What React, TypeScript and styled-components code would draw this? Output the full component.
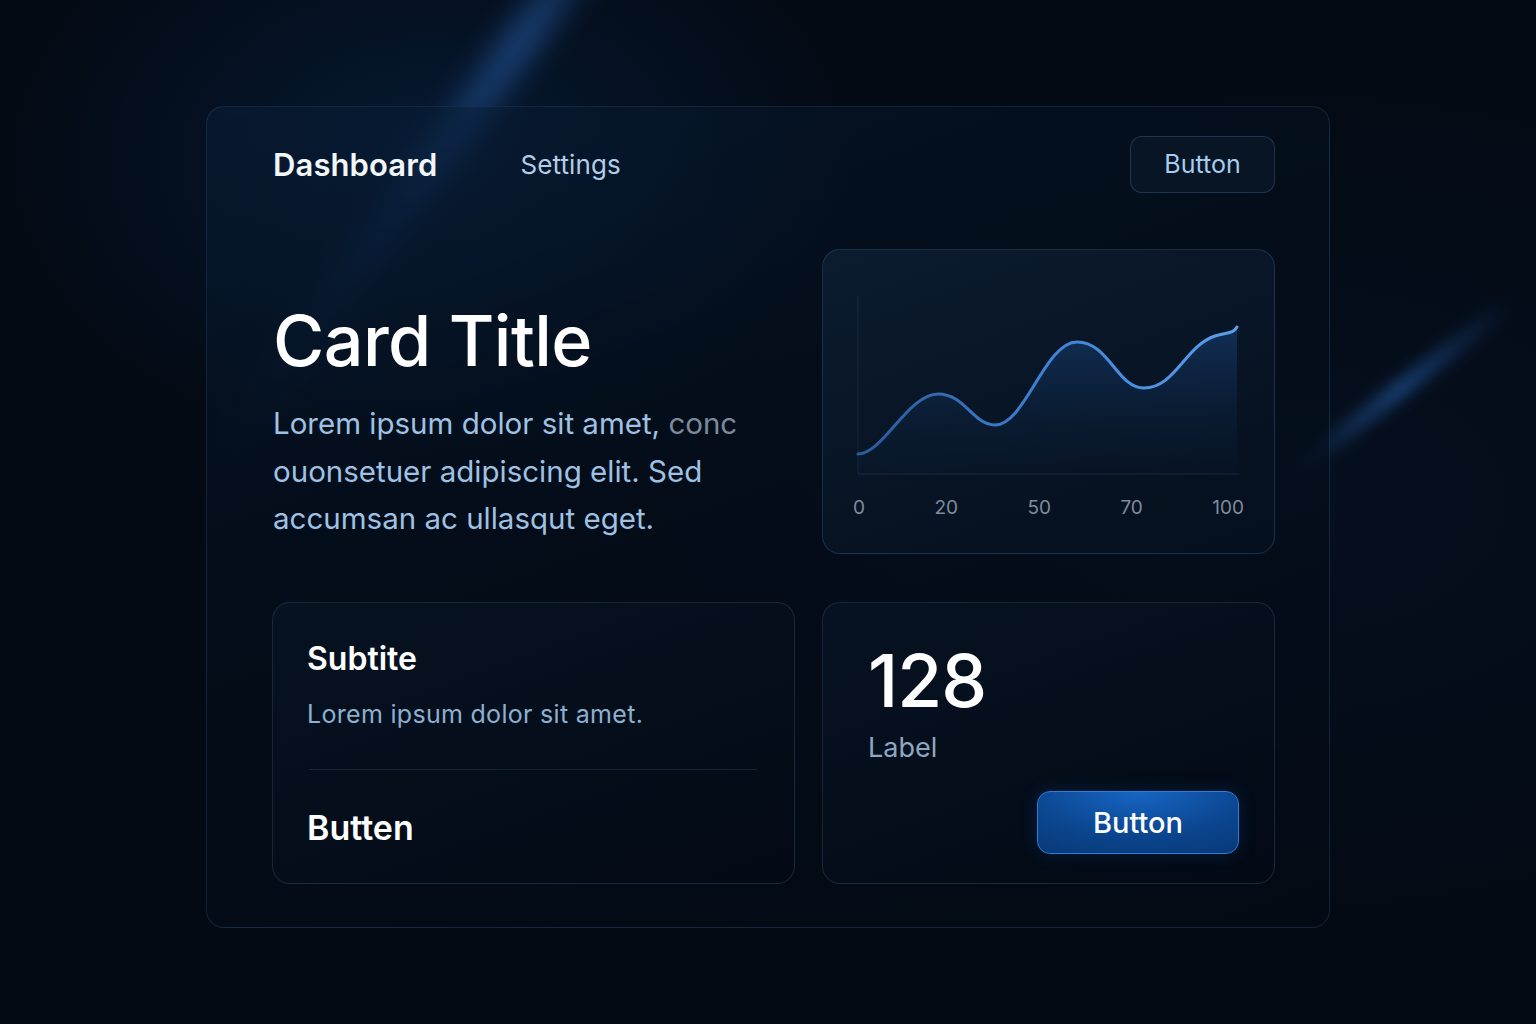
import React from 'react'
import styled, { createGlobalStyle } from 'styled-components'

const GlobalStyle = createGlobalStyle`
  html, body {
    margin: 0;
    padding: 0;
    background: #030a14;
  }
  * { box-sizing: border-box; }
`

const Page = styled.div`
  position: relative;
  width: 1536px;
  height: 1024px;
  overflow: hidden;
  font-family: Inter, "Noto Sans", sans-serif;
  background:
    radial-gradient(ellipse 600px 420px at 430px 160px, rgba(10, 40, 80, 0.5), transparent 70%),
    radial-gradient(ellipse 900px 600px at 1300px 500px, rgba(8, 24, 48, 0.35), transparent 70%),
    #030a14;
  padding: 106px 0 0 206px;

  &::before {
    content: '';
    position: absolute;
    left: 425px;
    top: -230px;
    width: 34px;
    height: 760px;
    background: linear-gradient(180deg, transparent, rgba(50, 120, 215, 0.45) 32%, rgba(30, 90, 170, 0.2) 60%, transparent);
    filter: blur(14px);
    transform: rotate(36deg);
    pointer-events: none;
  }

  &::after {
    content: '';
    position: absolute;
    left: 1392px;
    top: 250px;
    width: 14px;
    height: 280px;
    background: linear-gradient(180deg, transparent, rgba(50, 125, 225, 0.55) 50%, transparent);
    filter: blur(8px);
    transform: rotate(52deg);
    pointer-events: none;
  }
`

const Panel = styled.div`
  position: relative;
  z-index: 1;
  width: 1124px;
  height: 822px;
  border-radius: 18px;
  border: 1px solid rgba(90, 130, 180, 0.2);
  background: linear-gradient(160deg, rgba(10, 32, 58, 0.5) 0%, rgba(5, 16, 30, 0.55) 40%, rgba(3, 10, 20, 0.6) 100%);
  padding: 29px 54px 0 65px;
  display: flex;
  flex-direction: column;
`

const Nav = styled.nav`
  display: flex;
  align-items: center;
  height: 56px;
  gap: 83px;
`

const NavItem = styled.span<{ $active?: boolean }>`
  font-size: ${p => (p.$active ? '31px' : '26px')};
  font-weight: ${p => (p.$active ? 600 : 400)};
  color: ${p => (p.$active ? '#f3f6f9' : '#b3cde6')};
  padding-left: ${p => (p.$active ? '1px' : '0')};
  letter-spacing: 0.1px;
`

const GhostButton = styled.button`
  margin-left: auto;
  width: 145px;
  height: 57px;
  border-radius: 12px;
  border: 1px solid rgba(90, 130, 175, 0.3);
  background: rgba(10, 24, 42, 0.7);
  color: #a6cdf0;
  font-family: Inter, "Noto Sans", sans-serif;
  font-size: 25px;
  font-weight: 400;
`

const Grid = styled.div`
  display: grid;
  grid-template-columns: 523px 453px;
  grid-template-rows: 305px 282px;
  column-gap: 27px;
  row-gap: 48px;
  margin-top: 57px;
`

const Intro = styled.div`
  padding-top: 49px;
  padding-left: 1px;
`

const Title = styled.h1`
  margin: 0;
  font-size: 70px;
  font-weight: 500;
  line-height: 86px;
  color: #ffffff;
  letter-spacing: -0.6px;
`

const Lead = styled.p`
  margin: 16px 0 0;
  font-size: 29.5px;
  font-weight: 400;
  line-height: 47.5px;
  color: #9fc2e4;
`

const Fade = styled.span`
  color: #7c8a9a;
`

const Card = styled.div<{ $tone?: 'chart' | 'plain' }>`
  border-radius: 18px;
  border: 1px solid ${p => (p.$tone === 'chart' ? 'rgba(80, 120, 170, 0.28)' : 'rgba(70, 100, 140, 0.3)')};
  background: ${p =>
    p.$tone === 'chart'
      ? 'linear-gradient(160deg, rgba(14, 32, 54, 0.75), rgba(6, 16, 30, 0.75))'
      : 'linear-gradient(160deg, rgba(8, 20, 36, 0.85), rgba(3, 10, 20, 0.85))'};
  display: flex;
  flex-direction: column;
`

const ChartSvg = styled.svg`
  display: block;
`

const Axis = styled.div`
  display: flex;
  justify-content: space-between;
  margin: 8px 30px 0 30px;
  font-size: 19px;
  color: #7f8c9b;
`

const InfoCard = styled(Card)`
  padding: 36px 34px 0 34px;
`

const SubTitle = styled.h2`
  margin: 0;
  font-size: 32px;
  font-weight: 600;
  line-height: 40px;
  color: #ffffff;
`

const SubText = styled.p`
  margin: 19px 0 0;
  font-size: 25px;
  line-height: 32px;
  color: #8eb0d0;
  letter-spacing: 0.3px;
`

const Divider = styled.hr`
  margin: 39px 0 0 2px;
  width: 448px;
  border: 0;
  height: 1px;
  background: rgba(90, 120, 160, 0.22);
`

const FootTitle = styled.div`
  margin-top: 36px;
  font-size: 34px;
  font-weight: 600;
  line-height: 44px;
  color: #ffffff;
`

const StatCard = styled(Card)`
  padding: 38px 35px 0 45px;
`

const StatValue = styled.div`
  font-size: 73px;
  font-weight: 500;
  line-height: 80px;
  color: #ffffff;
  letter-spacing: -1px;
`

const StatLabel = styled.div`
  margin-top: 10px;
  font-size: 27px;
  line-height: 34px;
  color: #8ea7c1;
`

const PrimaryButton = styled.button`
  align-self: flex-end;
  margin-top: 26px;
  width: 202px;
  height: 63px;
  border-radius: 13px;
  border: 1px solid #2a7fdc;
  background: radial-gradient(ellipse 180px 70px at 50% 0%, #1666c4, #0b4690 60%, #093a78);
  color: #ffffff;
  font-family: Inter, "Noto Sans", sans-serif;
  font-size: 29px;
  font-weight: 500;
  box-shadow: 0 0 18px rgba(30, 110, 220, 0.18);
`

const curve =
  'M35,204 C60,204 85,144 115,144 C142,144 150,175 172,175 C202,175 222,92 254,92 C286,92 294,138 321,138 C352,138 362,96 392,86 C404,82 410,84 414,77'

const ticks = ['0', '20', '50', '70', '100']

const Chart = () => (
  <Card $tone="chart">
    <ChartSvg width="451" height="238" viewBox="0 0 451 238">
      <defs>
        <linearGradient id="stroke" x1="0" y1="0" x2="1" y2="0">
          <stop offset="0" stopColor="#2a5a98" />
          <stop offset="0.5" stopColor="#3f82d6" />
          <stop offset="1" stopColor="#5aa0ee" />
        </linearGradient>
        <linearGradient id="area" x1="0" y1="0" x2="0" y2="1">
          <stop offset="0" stopColor="#1d4f8f" stopOpacity="0.45" />
          <stop offset="1" stopColor="#0b2240" stopOpacity="0.1" />
        </linearGradient>
      </defs>
      <line x1="35" y1="46" x2="35" y2="224" stroke="rgba(80,120,170,0.18)" strokeWidth="1" />
      <line x1="35" y1="224" x2="416" y2="224" stroke="rgba(80,120,170,0.22)" strokeWidth="1" />
      <path d={`${curve} L414,224 L35,224 Z`} fill="url(#area)" />
      <path d={curve} fill="none" stroke="url(#stroke)" strokeWidth="3" strokeLinecap="round" />
    </ChartSvg>
    <Axis>
      {ticks.map(t => (
        <span key={t}>{t}</span>
      ))}
    </Axis>
  </Card>
)

const App = () => (
  <>
    <GlobalStyle />
    <Page>
      <Panel>
        <Nav>
          <NavItem $active>Dashboard</NavItem>
          <NavItem>Settings</NavItem>
          <GhostButton>Button</GhostButton>
        </Nav>
        <Grid>
          <Intro>
            <Title>Card Title</Title>
            <Lead>
              Lorem ipsum dolor sit amet, <Fade>conc</Fade>
              <br />
              ouonsetuer adipiscing elit. Sed
              <br />
              accumsan ac ullasqut eget.
            </Lead>
          </Intro>
          <Chart />
          <InfoCard>
            <SubTitle>Subtite</SubTitle>
            <SubText>Lorem ipsum dolor sit amet.</SubText>
            <Divider />
            <FootTitle>Butten</FootTitle>
          </InfoCard>
          <StatCard>
            <StatValue>128</StatValue>
            <StatLabel>Label</StatLabel>
            <PrimaryButton>Button</PrimaryButton>
          </StatCard>
        </Grid>
      </Panel>
    </Page>
  </>
)

export default App
